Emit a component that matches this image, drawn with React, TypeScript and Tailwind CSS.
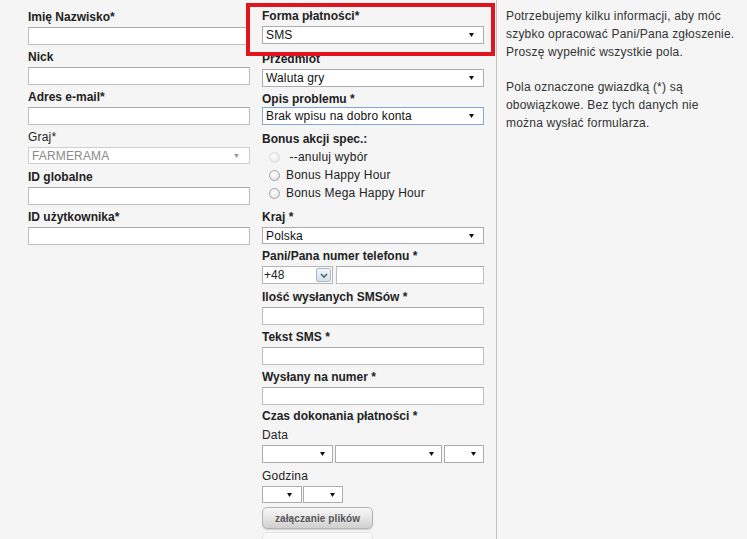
import React from 'react';

const Arrow = ({ color = '#111' }: { color?: string }) => (
  <svg width="5" height="4" viewBox="0 0 5 4" className="shrink-0">
    <path d="M0 0H5L2.5 4Z" fill={color} />
  </svg>
);

function Label({ text, className = 'h-[20px] leading-[20px]', bold = true }: { text: string; className?: string; bold?: boolean }) {
  return <div className={`${className} ${bold ? 'font-bold' : 'tracking-[0.2px]'} whitespace-nowrap`}>{text}</div>;
}

function Field({ className = '' }: { className?: string }) {
  return <div className={`h-[18px] bg-white border border-[#bdbdbd] border-t-[#a9a9a9] ${className}`} />;
}

function Select({
  value = '',
  className = 'w-full h-[18px]',
  border = 'border-[#acacac]',
  pr = 'pr-[9px]',
  muted = false,
}: {
  value?: string;
  className?: string;
  border?: string;
  pr?: string;
  muted?: boolean;
}) {
  return (
    <div className={`${className} ${border} ${pr} flex items-center justify-between bg-white border pl-[3px]`}>
      <span className={`leading-none whitespace-nowrap tracking-[0.15px] ${muted ? 'text-[#8a8a8a]' : 'text-[#111]'}`}>{value}</span>
      <Arrow color={muted ? '#9a9a9a' : '#111'} />
    </div>
  );
}

function Radio({ text, disabled = false }: { text: string; disabled?: boolean }) {
  return (
    <div className="h-[18px] flex items-center gap-[6px] pl-[7px]">
      <span
        className={`w-[11px] h-[11px] rounded-full border bg-[radial-gradient(circle_at_40%_35%,#ffffff,#dcdcdc)] ${
          disabled ? 'border-[#d2d2d2] opacity-70' : 'border-[#a3a3a3]'
        }`}
      />
      <span className="whitespace-pre tracking-[0.2px]">{text}</span>
    </div>
  );
}

export default function App() {
  return (
    <div className="relative w-[747px] h-[539px] overflow-hidden bg-[#f5f5f5] flex font-['Liberation_Sans',Arial,sans-serif] text-[12px] text-[#222]">
      {/* left column */}
      <div className="ml-[28px] w-[222px] pt-[7px] flex flex-col *:shrink-0">
        <Label text="Imię Nazwisko*" />
        <Field className="mb-[2px]" />
        <Label text="Nick" />
        <Field className="mb-[2px]" />
        <Label text="Adres e-mail*" />
        <Field className="mb-[2px]" />
        <Label text="Graj*" bold={false} />
        <Select value="FARMERAMA" muted border="border-[#cfcfcf]" pr="pr-[10px]" className="w-full h-[17px] mb-[3px]" />
        <Label text="ID globalne" />
        <Field className="mb-[2px]" />
        <Label text="ID użytkownika*" />
        <Field />
      </div>

      {/* middle column */}
      <div className="ml-[12px] w-[222px] pt-[7px] flex flex-col *:shrink-0">
        <Label text="Forma płatności*" className="h-[19px] leading-[19px]" />
        <Select value="SMS" />
        <Label text="Przedmiot" className="mt-[5px] h-[20px] leading-[20px]" />
        <Select value="Waluta gry" />
        <Label text="Opis problemu *" className="mt-[4px] h-[16px] leading-[16px]" />
        <Select value="Brak wpisu na dobro konta" border="border-[#7fa7d9]" />
        <Label text="Bonus akcji spec.:" className="mt-[5px] h-[18px] leading-[18px]" />
        <Radio text=" --anuluj wybór" disabled />
        <Radio text="Bonus Happy Hour" />
        <Radio text="Bonus Mega Happy Hour" />
        <Label text="Kraj *" className="mt-[5px] h-[20px] leading-[20px]" />
        <Select value="Polska" className="w-full h-[17px]" />
        <Label text="Pani/Pana numer telefonu *" className="mt-[2px] h-[20px] leading-[20px]" />
        <div className="flex h-[18px] gap-[3px]">
          <div className="w-[71px] h-full bg-white border border-[#b5b5b5] flex items-center justify-between pl-[1px] pr-[1px]">
            <span className="leading-none">+48</span>
            <span className="w-[15px] h-[14px] rounded-[2px] border border-[#a8b8cb] bg-gradient-to-b from-[#f2f6fa] to-[#d5dfea] flex items-center justify-center">
              <svg width="8" height="5" viewBox="0 0 8 5">
                <path d="M1 1L4 4L7 1" fill="none" stroke="#4d5d72" strokeWidth="1.6" />
              </svg>
            </span>
          </div>
          <Field className="flex-1" />
        </div>
        <Label text="Ilość wysłanych SMSów *" className="mt-[3px] h-[20px] leading-[20px]" />
        <Field />
        <Label text="Tekst SMS *" className="mt-[3px] h-[19px] leading-[19px]" />
        <Field />
        <Label text="Wysłany na numer *" className="mt-[3px] h-[19px] leading-[19px]" />
        <Field />
        <Label text="Czas dokonania płatności *" className="mt-[2px] h-[18px] leading-[18px]" />
        <Label text="Data" bold={false} />
        <div className="flex gap-[2px]">
          <Select className="w-[71px] h-[18px]" pr="pr-[7px]" />
          <Select className="w-[107px] h-[18px]" pr="pr-[7px]" />
          <Select className="flex-1 h-[18px]" pr="pr-[7px]" />
        </div>
        <Label text="Godzina" bold={false} className="mt-[3px] h-[20px] leading-[20px]" />
        <div className="flex gap-[1px]">
          <Select className="w-[40px] h-[17px]" pr="pr-[9px]" />
          <Select className="w-[40px] h-[17px]" pr="pr-[7px]" />
        </div>
        <button className="mt-[4px] w-[111px] h-[22px] rounded-[5px] border border-[#b3b3b3] bg-gradient-to-b from-[#f7f7f7] via-[#e6e6e6] to-[#cfcfcf] shadow-[0_1px_1px_rgba(0,0,0,0.15)] text-[10px] font-bold tracking-[0.1px] text-[#555]">
          załączanie plików
        </button>
        <div className="mt-[3px] w-[111px] h-[22px] rounded-[5px] border border-[#e2e2e2] bg-gradient-to-b from-[#fbfbfb] to-[#ececec]" />
      </div>

      {/* info column */}
      <div className="ml-[12px] h-full border-l border-[#c2c2c2] pl-[9px] pt-[7px] text-[#333] leading-[18px] tracking-[0.2px]">
        <div className="w-[230px]">
          <p>Potrzebujemy kilku informacji, aby móc szybko opracować Pani/Pana zgłoszenie. Proszę wypełnić wszystkie pola.</p>
          <p className="mt-[17px]">Pola oznaczone gwiazdką (*) są obowiązkowe. Bez tych danych nie można wysłać formularza.</p>
        </div>
      </div>

      {/* highlight frame */}
      <div className="absolute left-[246px] top-[3px] w-[249px] h-[53px] border-4 border-[#e2151f]" />
    </div>
  );
}
